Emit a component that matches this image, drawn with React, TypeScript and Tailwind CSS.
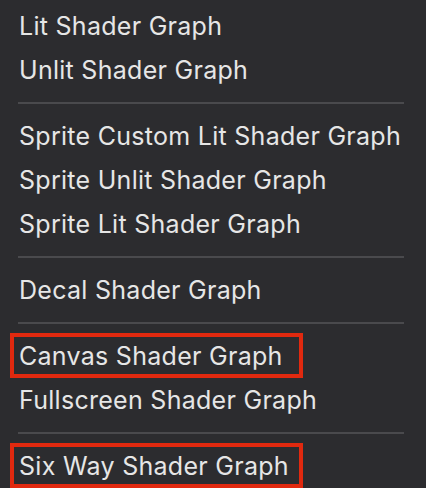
import React from "react";

type Entry = { kind: "item"; label: string; hl?: boolean } | { kind: "div" };

const entries: Entry[] = [
  { kind: "item", label: "Lit Shader Graph" },
  { kind: "item", label: "Unlit Shader Graph" },
  { kind: "div" },
  { kind: "item", label: "Sprite Custom Lit Shader Graph" },
  { kind: "item", label: "Sprite Unlit Shader Graph" },
  { kind: "item", label: "Sprite Lit Shader Graph" },
  { kind: "div" },
  { kind: "item", label: "Decal Shader Graph" },
  { kind: "div" },
  { kind: "item", label: "Canvas Shader Graph", hl: true },
  { kind: "item", label: "Fullscreen Shader Graph" },
  { kind: "div" },
  { kind: "item", label: "Six Way Shader Graph", hl: true },
];

export default function App() {
  return (
    <div
      className="w-[426px] h-[488px] overflow-hidden bg-[#2c2c2f] pt-1"
      style={{ fontFamily: "Inter, 'Noto Sans', sans-serif" }}
    >
      {entries.map((e, i) =>
        e.kind === "div" ? (
          <div key={i} className="h-[22px] flex items-center pl-[18px] pr-[22px]">
            <div className="h-[2px] w-full bg-[#4a4a4d]" />
          </div>
        ) : (
          <div key={i} className="relative h-[44px] flex items-center pl-[19px] text-[25px] leading-none text-[#e6e6e6] tracking-[0.28px]">
            <span>{e.label}</span>
            {e.hl && (
              <div className="absolute left-[10px] top-[-1px] w-[293px] h-[45px] border-4 border-[#e1290f]" />
            )}
          </div>
        )
      )}
    </div>
  );
}
